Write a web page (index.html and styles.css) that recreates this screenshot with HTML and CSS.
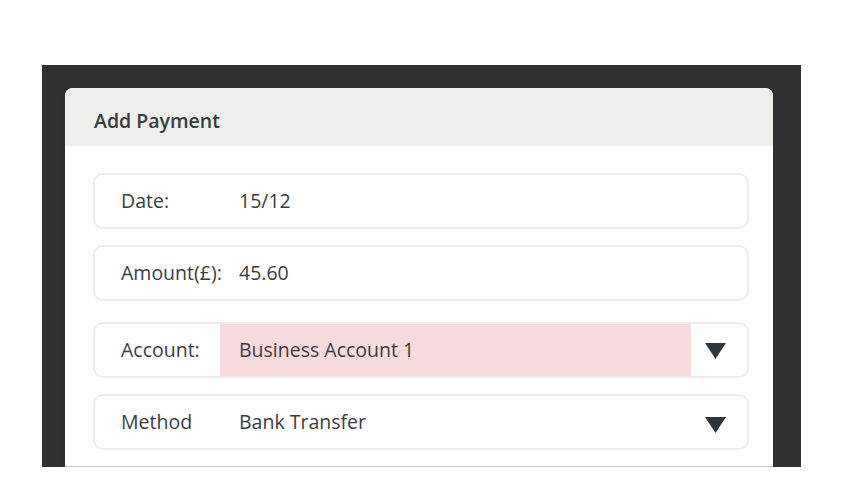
FILE: index.html
```html
<!DOCTYPE html>
<html>
<head>
<meta charset="utf-8">
<link rel="stylesheet" href="styles.css">
</head>
<body>
<div class="stage">
  <div class="card">
    <div class="card-header">Add Payment</div>
    <div class="card-body">
      <div class="row">
        <span class="label">Date:</span>
        <span class="value">15/12</span>
      </div>
      <div class="row">
        <span class="label">Amount(£):</span>
        <span class="value">45.60</span>
      </div>
      <div class="row row-gap">
        <span class="label">Account:</span>
        <span class="value value-select value-highlight">Business Account 1</span>
        <span class="caret"><svg width="21" height="16" viewBox="0 0 21 16"><polygon points="0,0 21,0 10.5,16" fill="#2f353b"/></svg></span>
      </div>
      <div class="row">
        <span class="label">Method</span>
        <span class="value value-select">Bank Transfer</span>
        <span class="caret caret-low"><svg width="21" height="16" viewBox="0 0 21 16"><polygon points="0,0 21,0 10.5,16" fill="#2f353b"/></svg></span>
      </div>
    </div>
  </div>
</div>
</body>
</html>
```
FILE: styles.css
```css
html, body {
  margin: 0;
  padding: 0;
  background: #ffffff;
  font-family: "Open Sans", "Noto Sans", sans-serif;
  color: #3a3d40;
}

.stage {
  margin: 65px 0 0 42px;
  width: 759px;
  height: 402px;
  background: #313133;
  padding: 23px 0 0 23px;
  box-sizing: border-box;
}

.card {
  width: 708px;
  height: 379px;
  background: #ffffff;
  border-radius: 8px 8px 0 0;
  border-bottom: 1px solid #c8c8c8;
  box-sizing: border-box;
  box-shadow: 0 3px 4px rgba(0, 0, 0, 0.08);
}

.card-header {
  height: 58px;
  background: #eeeeec;
  border-radius: 8px 8px 0 0;
  padding: 7px 0 0 29px;
  box-sizing: border-box;
  display: flex;
  align-items: center;
  font-size: 19.5px;
  font-weight: 600;
  color: #383b3e;
}

.card-body {
  padding: 27px 24px 0 28px;
  display: flex;
  flex-direction: column;
  gap: 16px;
}

.row {
  height: 56px;
  border: 2px solid #ededed;
  border-radius: 10px;
  box-sizing: border-box;
  display: flex;
  align-items: stretch;
  font-size: 19.5px;
  overflow: hidden;
}

.row-gap {
  margin-top: 5px;
}

.label {
  width: 125px;
  padding-left: 26px;
  padding-bottom: 1px;
  box-sizing: border-box;
  display: flex;
  align-items: center;
  flex-shrink: 0;
  white-space: nowrap;
}

.value {
  flex: 1;
  padding-left: 19px;
  padding-bottom: 1px;
  box-sizing: border-box;
  display: flex;
  align-items: center;
  white-space: nowrap;
}

.value-select {
  flex: 0 0 471px;
}

.value-highlight {
  background: #f7dadd;
}

.caret {
  flex: 1;
  display: flex;
  align-items: center;
  justify-content: center;
  padding: 2px 8px 0 0;
}

.caret-low {
  padding-top: 6px;
}
```
